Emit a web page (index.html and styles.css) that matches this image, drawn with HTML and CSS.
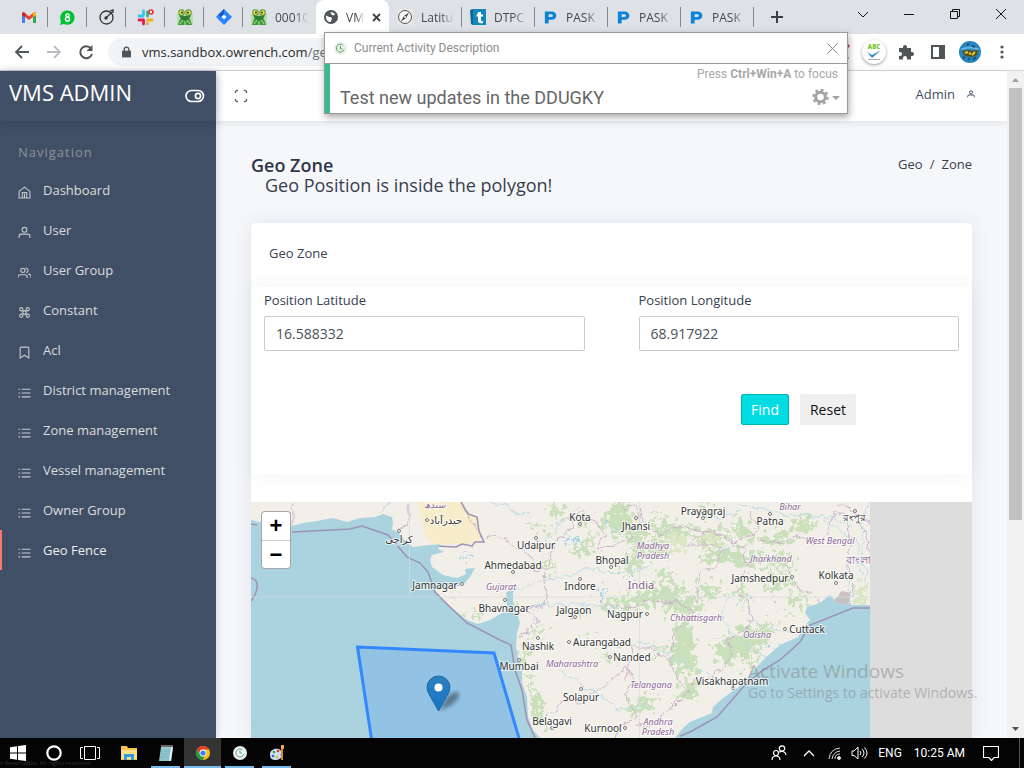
FILE: index.html
```html
<!DOCTYPE html>
<html lang="en">
<head>
    <meta charset="UTF-8">
    <meta name="viewport" content="width=device-width, initial-scale=1.0">
    <title>VMS ADMIN - Geo Zone</title>
    <link rel="stylesheet" href="styles.css">
</head>
<body>
    <!-- shared icon shapes -->
    <svg class="defs" aria-hidden="true">
        <symbol id="i-list" viewBox="0 0 24 24"><path d="M7 6h16M7 13h16M7 20h16M1 6h3M1 13h3M1 20h3"/></symbol>
        <symbol id="i-user" viewBox="0 0 24 24"><circle cx="12" cy="7" r="4.500"/><path d="M2 22v-3a4 4 0 0 1 4-4h12a4 4 0 0 1 4 4v3"/></symbol>
        <symbol id="i-frog" viewBox="0 0 16 16"><path d="M0 5h16v11H0z" fill="#b9dcae"/><path d="M1 16l2-6 5-3 5 3 2 6z" fill="#3f9b3b"/><path d="M2 6l6 1 6-1-2 4-4 2-4-2z" fill="#2e7d32"/><circle cx="4.500" cy="3.500" r="3.200" fill="#4a9a2c"/><circle cx="11.500" cy="3.500" r="3.200" fill="#4a9a2c"/><circle cx="4.500" cy="3.500" r="2.200" fill="#ffe14a"/><circle cx="11.500" cy="3.500" r="2.200" fill="#ffe14a"/><circle cx="5" cy="3.500" r="1" fill="#222"/><circle cx="11" cy="3.500" r="1" fill="#222"/><path d="M3 15l3-4M13 15l-3-4M8 12v4" stroke="#b6e39c"/></symbol>
        <symbol id="i-paypal" viewBox="0 0 16 16"><path d="M2 2h7c7 0 7 9 0 9H6v4H2zM6 5v3h3c2 0 2-3 0-3z" fill="#0b84d8" fill-rule="evenodd"/></symbol>
    </svg>

    <div class="tabstrip">
        <div class="tab pinned"><svg width="14" height="11" viewBox="0 0 14 11"><path d="M0 1.500V11h3V5z" fill="#4285f4"/><path d="M14 1.500V11h-3V5z" fill="#34a853"/><path d="M0 2q0-3 3-1l4 3.200L11 1q3-2 3 1l-3 3-4 3-4-3z" fill="#ea4335"/><path d="M0 2q0-2 2-1.500L3 1v4L0 3z" fill="#c5221f"/><path d="M14 2q0-2-2-1.500L11 1v4l3-2z" fill="#fbbc04"/></svg></div>
        <div class="tab pinned"><svg width="15" height="15" viewBox="0 0 15 15"><path d="M0 15l1-4a7.200 7.200 0 1 1 3 3z" fill="#00c136"/><circle cx="7.500" cy="5.500" r="1.600" fill="none" stroke="#fff" stroke-width="1.400"/><circle cx="7.500" cy="9.200" r="2" fill="none" stroke="#fff" stroke-width="1.400"/></svg></div>
        <div class="tab pinned"><svg width="16" height="16" viewBox="0 0 16 16" fill="none" stroke="#333" stroke-width="1.300"><circle cx="7.500" cy="8.500" r="6.500"/><path d="M7 9l6-6M11 2l3-1v3" /><circle cx="7" cy="9" r="1" fill="#333"/></svg></div>
        <div class="tab pinned"><svg width="17" height="17" viewBox="0 0 17 17" stroke-width="2.800" stroke-linecap="round"><path d="M6.500 2v4M2 7h4" stroke="#36c5f0"/><path d="M10.500 3v4" stroke="#2eb67d"/><path d="M10.500 11H15M10.500 14v1" stroke="#ecb22e"/><path d="M2 11h4M6.500 11v4" stroke="#e01e5a"/><circle cx="14" cy="3" r="2" fill="#fff" stroke="#e0303a" stroke-width="1.600"/></svg></div>
        <div class="tab pinned"><svg width="16" height="16"><use href="#i-frog"/></svg></div>
        <div class="tab pinned"><svg width="16" height="16" viewBox="0 0 16 16"><path d="M8 0l8 8-8 8-8-8z" fill="#2684ff"/><path d="M8 0v5L5 8 2 6z" fill="#0f5bd0"/><path d="M8 5.500L10.500 8 8 10.500 5.500 8z" fill="#fff"/></svg></div>
        <div class="tab bare"><svg width="16" height="16"><use href="#i-frog"/></svg><span class="tab-title">000100</span></div>
        <div class="tab active"><svg width="14" height="14" viewBox="0 0 14 14"><circle cx="7" cy="7" r="7" fill="#50555a"/><path d="M2 5.500c2 .5 3 2 5 1.500l1 2-1.500 3C4 12 2 10 2 7zM7 2l4 1.500-1 2L8 5 6.500 3z" fill="#fff"/></svg><span class="tab-title">VMS</span><button class="tab-close" aria-label="Close tab"><svg width="9" height="9" viewBox="0 0 9 9"><path d="M1 1l7 7M8 1L1 8" stroke="#3c4043" stroke-width="1.800"/></svg></button></div>
        <div class="tab"><svg width="16" height="16" viewBox="0 0 16 16"><path d="M0 0h16v16H0z" fill="#e9e7e2"/><circle cx="8" cy="8" r="6.500" fill="#f5f5f3" stroke="#555"/><path d="M12 3.500L9 9l-5 3.500L7 7z" fill="#333"/><circle cx="8" cy="8" r="1" fill="#fff"/></svg><span class="tab-title">Latitude</span></div>
        <div class="tab"><svg width="16" height="16" viewBox="0 0 16 16"><path d="M0 1l3-1v16l-2-1z" fill="#0e6694"/><path d="M3 0h13v16H3z" fill="#1486b9"/><path d="M8 3h3v2.500h2v2h-2V11q0 1.500 2 1v2q-5 1-5-2.500v-4H6.500V6Q8 5.500 8 3z" fill="#fff"/></svg><span class="tab-title">DTPC T</span></div>
        <div class="tab"><svg width="15" height="16"><use href="#i-paypal"/></svg><span class="tab-title">PASK -</span></div>
        <div class="tab"><svg width="15" height="16"><use href="#i-paypal"/></svg><span class="tab-title">PASK -</span></div>
        <div class="tab"><svg width="15" height="16"><use href="#i-paypal"/></svg><span class="tab-title">PASK -</span></div>
        <button class="new-tab" aria-label="New tab"><svg width="12" height="12" viewBox="0 0 12 12"><path d="M6 0v12M0 6h12" stroke="#3c4043" stroke-width="2"/></svg></button>
        <div class="window-buttons">
            <button aria-label="Search tabs"><svg width="12" height="12" viewBox="0 0 12 12"><path d="M1 4l5 5 5-5"/></svg></button>
            <button aria-label="Minimize"><svg width="12" height="12" viewBox="0 0 12 12"><path d="M1 6.500h10"/></svg></button>
            <button aria-label="Restore"><svg width="12" height="12" viewBox="0 0 12 12"><path d="M1.500 3.500h7v7h-7zM3.500 3V1.500h7v7H9"/></svg></button>
            <button aria-label="Close"><svg width="12" height="12" viewBox="0 0 12 12"><path d="M1 1l10 10M11 1L1 11"/></svg></button>
        </div>
    </div>

    <div class="toolbar">
        <button class="tool" aria-label="Back"><svg width="16" height="16" viewBox="0 0 16 16"><path d="M15 8H2M8 2L2 8l6 6" fill="none" stroke="#50555a" stroke-width="1.800"/></svg></button>
        <button class="tool" aria-label="Forward"><svg width="16" height="16" viewBox="0 0 16 16"><path d="M1 8h13M8 2l6 6-6 6" fill="none" stroke="#b9bcc0" stroke-width="1.800"/></svg></button>
        <button class="tool" aria-label="Reload"><svg width="16" height="16" viewBox="0 0 16 16"><path d="M13 4.500A6 6 0 1 0 14 10" fill="none" stroke="#50555a" stroke-width="2"/><path d="M14.500 1v6h-6z" fill="#50555a"/></svg></button>
        <div class="address">
            <svg width="9" height="12" viewBox="0 0 10 12"><path d="M0 4.500h10V12H0z" fill="#50555a"/><path d="M2.500 5V3a2.500 2.500 0 0 1 5 0v2" fill="none" stroke="#50555a" stroke-width="1.500"/></svg>
            <span>vms.sandbox.owrench.com<i>/geo</i></span>
        </div>
        <svg class="ext-cut" width="14" height="16" viewBox="0 0 14 16"><path d="M1 1l11 14M13 1L2 15" stroke="#d8364f" stroke-width="2.500"/></svg>
        <button class="tool" aria-label="Spell checker"><span class="abc">ABC<svg width="16" height="10" viewBox="0 0 16 10"><path d="M1 2l5 3 9-5-9 8z" fill="#2f8fc4"/><path d="M2 9.500h12" stroke="#aaa"/></svg></span></button>
        <button class="tool" aria-label="Extensions"><svg width="16" height="16" viewBox="0 0 16 16"><path d="M1 4h4V3a2 2 0 0 1 4 0v1h4v4h1a2 2 0 0 1 0 4h-1v3.500H9V14a2 2 0 0 0-4 0v1.500H1V12h1a2 2 0 0 0 0-4H1z" fill="#50555a"/></svg></button>
        <button class="tool" aria-label="Side panel"><svg width="14" height="14" viewBox="0 0 14 14"><path d="M1 1h12v12H1z" fill="none" stroke="#50555a" stroke-width="2"/><path d="M8 1h5v12H8z" fill="#50555a"/></svg></button>
        <button class="tool" aria-label="Profile"><svg width="22" height="22" viewBox="0 0 22 22"><circle cx="11" cy="11" r="11" fill="#2586bd"/><path d="M1 8q10-5 20 0l-3 1Q11 6 4 9z" fill="#69b4dc"/><path d="M3 10l6-1 5 1 5-1-1 5-5 2-7-1z" fill="#574f1d"/><path d="M6 12l3-1M13 14l3-3M10 12l2 1" stroke="#e3cc2c" stroke-width="2"/><path d="M4 17l2-1M9 19l2-2M14 19l3-3M8 4l2-1M13 5l3 1" stroke="#173f68" stroke-width="1.500"/></svg></button>
        <button class="tool" aria-label="Menu"><svg width="4" height="14" viewBox="0 0 4 14" fill="#50555a"><circle cx="2" cy="2" r="1.600"/><circle cx="2" cy="7" r="1.600"/><circle cx="2" cy="12" r="1.600"/></svg></button>
    </div>

    <div class="page">
        <aside class="sidebar">
            <div class="brand">
                <a href="#">VMS ADMIN</a>
                <button aria-label="Toggle sidebar"><svg width="20" height="14" viewBox="0 0 20 14" fill="none" stroke="#fff" stroke-width="1.600"><rect x="1" y="1.500" width="17.500" height="11" rx="5.500"/><circle cx="13" cy="7" r="2.600"/></svg></button>
            </div>
            <div class="nav-label">Navigation</div>
            <nav>
                <a href="#"><svg viewBox="0 0 24 24"><path d="M2 10L12 2l10 8v12H2zM8 22V12h8v10M12 14v8"/></svg>Dashboard</a>
                <a href="#"><svg><use href="#i-user"/></svg>User</a>
                <a href="#"><svg viewBox="0 0 24 24"><circle cx="9" cy="8" r="4"/><path d="M0 22v-2a4 4 0 0 1 4-4h9a4 4 0 0 1 4 4v2M14 4a4 4 0 1 1 1 8M19 15q5 0 5 5v2"/></svg>User Group</a>
                <a href="#"><svg viewBox="0 0 24 24"><path d="M18 3a3 3 0 0 0-3 3v12a3 3 0 1 0 3-3H6a3 3 0 1 0 3 3V6a3 3 0 1 0-3 3h12a3 3 0 1 0 0-6z"/></svg>Constant</a>
                <a href="#"><svg viewBox="0 0 24 24"><path d="M20 22l-8-5-8 5V4a2 2 0 0 1 2-2h12a2 2 0 0 1 2 2z"/></svg>Acl</a>
                <a href="#"><svg><use href="#i-list"/></svg>District management</a>
                <a href="#"><svg><use href="#i-list"/></svg>Zone management</a>
                <a href="#"><svg><use href="#i-list"/></svg>Vessel management</a>
                <a href="#"><svg><use href="#i-list"/></svg>Owner Group</a>
                <a href="#" class="current"><svg><use href="#i-list"/></svg>Geo Fence</a>
            </nav>
        </aside>

        <main class="main">
            <header class="topbar">
                <button aria-label="Full screen"><svg width="14" height="14" viewBox="0 0 14 14"><path d="M1.500 4V3A1.500 1.500 0 0 1 3 1.500h1M10 1.500h1A1.500 1.500 0 0 1 12.500 3v1M12.500 10v1a1.500 1.500 0 0 1-1.500 1.500h-1M4 12.500H3A1.500 1.500 0 0 1 1.500 11v-1" fill="none" stroke="#56627a" stroke-width="1.300"/></svg></button>
                <a href="#" class="account">Admin <svg width="8" height="8"><use href="#i-user"/></svg></a>
            </header>

            <div class="content">
                <div class="page-head">
                    <div>
                        <h1>Geo Zone</h1>
                        <p>Geo Position is inside the polygon!</p>
                    </div>
                    <div class="crumbs"><a href="#">Geo</a><span>/</span><a href="#">Zone</a></div>
                </div>

                <section class="card">
                    <h2>Geo Zone</h2>
                    <form class="search">
                        <div class="fields">
                            <div class="field">
                                <label for="lat">Position Latitude</label>
                                <input id="lat" type="text" value="16.588332">
                            </div>
                            <div class="field">
                                <label for="lng">Position Longitude</label>
                                <input id="lng" type="text" value="68.917922">
                            </div>
                        </div>
                        <div class="actions">
                            <button type="button" class="btn btn-find">Find</button>
                            <button type="reset" class="btn">Reset</button>
                        </div>
                    </form>

                    <div class="map">
                        <svg class="tiles" width="619" height="236" viewBox="251 502 619 236">
                            <defs>
                                <filter id="rough" x="-10%" y="-10%" width="120%" height="120%"><feTurbulence type="fractalNoise" baseFrequency="0.16" numOctaves="4" seed="4"/><feDisplacementMap in="SourceGraphic" scale="34" xChannelSelector="R" yChannelSelector="G"/></filter>
                                <filter id="wobble" x="-10%" y="-10%" width="120%" height="120%"><feTurbulence type="fractalNoise" baseFrequency="0.1" numOctaves="3" seed="9"/><feDisplacementMap in="SourceGraphic" scale="10" xChannelSelector="R" yChannelSelector="G"/></filter>
                                <filter id="soft"><feGaussianBlur stdDeviation="2"/></filter>
                                <linearGradient id="pin" x1="0" y1="0" x2="0" y2="1"><stop offset="0" stop-color="#2e80bd"/><stop offset="1" stop-color="#1675c8"/></linearGradient>
                                <clipPath id="coast"><use href="#land"/></clipPath>
                            </defs>
                            <path id="land" fill="#f2efe9" d="M251 502V520L260 522 272 521 292 526 303 523 317 521 333 518 347 522 360 518 375 517 383 514 392 517 393 523 392 529 399 533 407 543 413 547 430 545 440 544 438 549 444 552 432 555 430 560 432 567 443 575 457 578 466 574 465 569 475 568 470 577 463 585 453 587 442 587 435 590 443 600 457 612 467 620 478 624 490 620 500 614 505 612 507 603 506 592 513 590 513 603 517 613 520 623 517 633 516 647 518 657 522 670 522 683 527 697 528 717 533 730 540 738H675L683 728 690 722 712 713 713 707 723 698 740 686 750 675 763 660 780 645 798 637 807 623 810 620 805 613 807 607 820 603 830 595 837 603 850 605 870 605V502Z"/>
                            <g clip-path="url(#coast)">
                                <path fill="#f7edcb" d="M418 502h44l6 10 9 5 4 20-4 6-42 2-9-8-5-20z"/>
                                <g class="wood" filter="url(#rough)">
                                    <path d="M603 510l20-10 10 20-15 18-12-8zM625 535l12-12 8 14-10 12zM650 523l40 2-5 8-30 2zM690 532l30-4 14 12-20 6-18-4zM636 549l34-14 12 8-30 12-22 20-12-6zM598 606l22-9 40-10-4-16 14-4-2 22 20-4-8 14-30 6-42 4zM696 554l40-4 26 8-8 6-50-2zM666 602l30-5 10 12-34 8zM676 625l14-6 4 30 4 22-20 0-8-14zM714 645l20-12 6 22-18 14zM727 640l18-14 28-2-6 20-20 12-24 2zM684 678l14 4-2 14-16 4zM626 705l28-12 5 8-26 15zM520 640l9 0-2 30-4 12zM530 685l10 10 6 30-12 2zM510 604l8 4-4 14zM454 598l8 0-2 4zM468 612l16-2 0 8-12-2zM533 640l8-16 4 6zM733 520l18 6 2 12-18-4zM760 538l24-6 10 8-22 8zM790 522l20-4 6 12-18 6zM752 560l20-6 24 6-8 6-34 2zM762 578l24-6 8 12-22 6zM788 600l12-8 6 10-12 10zM735 590l10-14 4 24zM526 520l22 8-6 6zM548 506l20 0-10 20zM544 556l12 16-8 4zM570 548l30-14-16 26zM742 668l16-14-4 14zM650 506l16 10-10 4zM575 610l14 4-10 6zM583 635l8 8-6 4zM600 652l18 4-10 4zM650 650l14 0-2 8zM576 520l14-6-8 14zM700 588l14-8 8 14-16 4zM698 506l14 4-8 6z"/>
                                </g>
                                <g fill="#dbe6c3" filter="url(#rough)"><path d="M668 535l18 0 4 12-20 4zM690 533l34 4-12 10zM656 540l24-8-6 14zM851 590l14-6 4 18-18 0z"/></g>
                                <g class="water" filter="url(#rough)"><path d="M462 556l6-5 3 6zM572 536l4 4-4 6-4-6zM598 592l4-4 2 8zM606 520l2 8 2-2zM534 612l6-6 2 4zM738 602l8 0-6 8zM770 606l6 0 0 4zM720 548l6 0-2 6zM772 648l8-6-4 8zM630 575l8-3-6 6z"/></g>
                                <path d="M834 602l8-8 8-2 1 14-16 1z" fill="#c8c1c3" filter="url(#wobble)"/>
                                <g class="rivers" filter="url(#wobble)"><path d="M490 502l40 14M740 502l30 10 30 4 30 2 22 10M825 520l18 12 14 10 4 40M866 502l-4 46 6 40M700 510l20 10 20-10M580 505l-20 18-14 20M510 592l30-10 50-14 30 6 30-8M520 610l40-6 40 2 30 6M640 640l40 20 30 18M560 670l30 20 30 20 30-5M770 660l-30-18-20-22 8-26M800 636l-30-8-22-8M850 604l-4-44M380 514l8-12"/></g>
                                <g class="borders" filter="url(#wobble)">
                                    <path d="M293 502v30M408 502v22l-16 10M463 502l6 16 13 20 18-2 16 10 14 10 6 14 12-2 10-30 6-4 10-8-6-8 16-6 4 8 10 2 6 14-8 12 18-2 20-8-2-14 8-4-4-14-12 2 2-10M545 572l2 20-4 16-22 0 18 12-12 14-8 4M600 602l30 6 20-8 30 2 16 12-20 16-6 30 8 20 12 14M696 602l4-28 16-10 8-14-12-6-24 0 12-10 20-2 14 12 10 6 2 18-8 22 10 10 4 26-24 14 4 16-18 20-20 10-22 22-26 20-10-4M640 506l4 22 20 6 10-8 22 4 28 4 10 10 24-14-8-20M548 718l14-16 20 0 24-18 20-16 8 14-10 14 14 20-24 16-2 18M627 680l6-32 18 0 20 16M760 540l20 4 16-8 22 8 8-12 8-18 10 0 6 26-2 20 6 40M784 556l6 20 10 14 12 4 10 10M860 520l8 20 2 22M500 720l20-14M838 502l14 8 14 4 4 10"/>
                                </g>
                                <path d="M461 502l7 12 9 3 2 14 5 11-9 0-3 4-10-2-6 3-20-1v7l-10 2-6 8" class="state"/>
                            </g>
                            <path class="state" d="M251 524l6 1M292 532l58-3 12-3 26 9 19 22 13 6 8 9 7 20 18 18 14 13 33 17 11 5 4 25 7 20 5 30 8 18M870 608h-17l-43 17-10 17-20 18-17 10-18 15-28 32-27 15-10 4M251 578q10 2 4 17l-4 6"/>
                            <path class="seam" d="M251 597h619M409.500 502v94M639.500 502v236"/>

                            <g class="towns">
                                <circle cx="427" cy="520" r="1.500"/><circle cx="399" cy="531" r="1.500"/><circle cx="462" cy="584" r="1.500"/><circle cx="580" cy="524" r="1.500"/><circle cx="536" cy="538" r="1.500"/><circle cx="513" cy="572" r="1.500"/><circle cx="505" cy="600" r="1.500"/><circle cx="611" cy="567" r="1.500"/><circle cx="580" cy="579" r="1.500"/><circle cx="636" cy="518" r="1.500"/><circle cx="703" cy="518" r="1.500"/><circle cx="575" cy="617" r="1.500"/><circle cx="647" cy="614" r="1.500"/><circle cx="538" cy="638" r="1.500"/><circle cx="569" cy="642" r="1.500"/><circle cx="610" cy="657" r="1.500"/><circle cx="519" cy="660" r="1.500"/><circle cx="581" cy="689" r="1.500"/><circle cx="552" cy="728" r="1.500"/><circle cx="625" cy="728" r="1.500"/><circle cx="733" cy="688" r="1.500"/><circle cx="770" cy="514" r="1.500"/><circle cx="792" cy="577" r="1.500"/><circle cx="836" cy="583" r="1.500"/><circle cx="785" cy="629" r="1.500"/><circle cx="855" cy="511" r="1.500"/>
                            </g>
                            <g class="city">
                                <text x="446" y="524">حيدرآباد</text><text x="399" y="543">کراچی</text><text x="435" y="589">Jamnagar</text><text x="580" y="521">Kota</text><text x="536" y="549">Udaipur</text><text x="513" y="569">Ahmedabad</text><text x="504" y="612">Bhavnagar</text><text x="612" y="564">Bhopal</text><text x="580" y="590">Indore</text><text x="636" y="530">Jhansi</text><text x="703" y="515">Prayagraj</text><text x="574" y="614">Jalgaon</text><text x="625" y="618">Nagpur</text><text x="538" y="650">Nashik</text><text x="602" y="646">Aurangabad</text><text x="632" y="661">Nanded</text><text x="519" y="670">Mumbai</text><text x="581" y="701">Solapur</text><text x="552" y="725">Belagavi</text><text x="603" y="732">Kurnool</text><text x="732" y="685">Visakhapatnam</text><text x="770" y="525">Patna</text><text x="760" y="582">Jamshedpur</text><text x="836" y="579">Kolkata</text><text x="807" y="633">Cuttack</text><text x="854" y="521">রংপুর</text>
                            </g>
                            <g class="region">
                                <text x="435" y="508">سندھ</text><text x="501" y="590">Gujarat</text><text x="653" y="549">Madhya</text><text x="653" y="559">Pradesh</text><text x="696" y="621">Chhattisgarh</text><text x="572" y="667">Maharashtra</text><text x="651" y="688">Telangana</text><text x="658" y="725">Andhra</text><text x="658" y="735">Pradesh</text><text x="790" y="510">Bihar</text><text x="830" y="544">West Bengal</text><text x="771" y="562">Jharkhand</text><text x="757" y="638">Odisha</text>
                            </g>
                            <g class="country"><text x="641" y="589">India</text><text x="858" y="564">বাংলা</text></g>

                            <path class="zone" d="M357.500 647L494 653 526 762H375z"/>
                            <path d="M439 711l8-14q10-8 12-3 0 9-20 17z" fill="#000" opacity=".4" filter="url(#soft)"/>
                            <path d="M438.500 711l-9-16q-2.500-4-2.500-7.500a11.500 11.500 0 0 1 23 0q0 3.500-2.500 7.500z" fill="url(#pin)" stroke="#2268a0"/>
                            <circle cx="438.500" cy="687.500" r="4" fill="#fff"/>
                        </svg>
                        <div class="zoom">
                            <button aria-label="Zoom in">+</button>
                            <button aria-label="Zoom out">−</button>
                        </div>
                    </div>
                </section>
            </div>
        </main>

        <div class="scrollbar">
            <svg width="9" height="5" viewBox="0 0 9 5"><path d="M1 5l3.500-4L8 5z" fill="#a3a3a3"/></svg>
            <div class="thumb"></div>
            <svg width="9" height="5" viewBox="0 0 9 5"><path d="M1 0l3.500 4L8 0z" fill="#505050"/></svg>
        </div>
    </div>

    <div class="taskbar">
        <button class="task" aria-label="Start"><svg width="16" height="16" viewBox="0 0 16 16"><path d="M0 2.300l7-1v6.200H0zM8 1.100L16 0v7.500H8zM0 8.500h7v6.200l-7-1zM8 8.500h8V16l-8-1.100z" fill="#fff"/></svg></button>
        <button class="task" aria-label="Cortana"><svg width="16" height="16" viewBox="0 0 16 16"><circle cx="8" cy="8" r="6.700" fill="none" stroke="#fff" stroke-width="2.200"/></svg></button>
        <button class="task" aria-label="Task view"><svg width="20" height="16" viewBox="0 0 20 16"><path d="M4.500 1.500h11v13h-11zM3 2.500H.5v11H3M17 2.500h2.500v11H17" fill="none" stroke="#fff"/></svg></button>
        <button class="task app" aria-label="File Explorer"><svg width="16" height="14" viewBox="0 0 16 14"><path d="M0 0h6l1 2h9v12H0z" fill="#f5c64b"/><path d="M0 4h16v9H0z" fill="#ffe08a"/><path d="M3 14V8h10v6h-3v-3H6v3z" fill="#2f9be0"/></svg></button>
        <button class="task app open" aria-label="Notepad"><svg width="16" height="17" viewBox="0 0 16 17"><path d="M3 2h12l-2 14H1z" fill="#8fc5cf"/><path d="M13 2h2l-2 14h-2z" fill="#e0eef0"/><path d="M4 0v3M6 0v3M8 0v3M10 0v3M12 0v3M14 0v3" stroke="#ccc"/><path d="M3 6h9M3 9h8M2 12h9" stroke="#7db4be"/></svg></button>
        <button class="task app open focused" aria-label="Chrome"><svg width="14" height="14" viewBox="0 0 14 14"><circle cx="7" cy="7" r="7" fill="#fbc116"/><path d="M1 3.500a7 7 0 0 1 12 0H7a3.500 3.500 0 0 0-3 5.200z" fill="#e33b2e"/><path d="M1 3.500l3 5.200a3.500 3.500 0 0 0 4.500 1.600L7 14A7 7 0 0 1 1 3.500z" fill="#1b9a4e"/><circle cx="7" cy="7" r="3.400" fill="#fff"/><circle cx="7" cy="7" r="2.600" fill="#3b7ded"/></svg></button>
        <button class="task app open" aria-label="Time tracker"><svg width="14" height="14" viewBox="0 0 14 14"><circle cx="7" cy="7" r="7" fill="#eee"/><path d="M9.500 4a4 4 0 1 0 1.200 4M7 4.500V7h2" fill="none" stroke="#5bb585"/></svg></button>
        <button class="task app open" aria-label="Paint"><svg width="16" height="16" viewBox="0 0 16 16"><path d="M1 9c0-5 9-7 11-3 1 2-1 3 0 5s-2 4-6 4-5-3-5-6z" fill="#c9e2f1"/><circle cx="5" cy="7" r="1.300" fill="#3b9c46"/><circle cx="9" cy="6" r="1.300" fill="#d33"/><circle cx="4" cy="11" r="1.300" fill="#2769c7"/><circle cx="8" cy="12" r="1.300" fill="#efb91e"/><path d="M13 1v14" stroke="#d9862c" stroke-width="2"/><path d="M12 0h3v4h-3z" fill="#e8aa52"/></svg></button>
        <span class="ghost">s Reservados. All rights reserved.</span>
        <div class="tray">
            <svg width="16" height="16" viewBox="0 0 16 16" fill="none" stroke="#fff" stroke-width="1.200"><circle cx="11" cy="3.500" r="2.700"/><circle cx="5" cy="8" r="2.500"/><path d="M1 15q0-4 4-4t4 4M8 7q6-2 7 3"/></svg>
            <svg width="12" height="8" viewBox="0 0 12 8" fill="none" stroke="#fff" stroke-width="1.300"><path d="M1 7l5-5 5 5"/></svg>
            <svg width="13" height="13" viewBox="0 0 13 13" fill="none" stroke="#ddd"><path d="M1 12Q2 2 12 1M4 12Q5 5 12 4M7 12q0-5 5-5"/><circle cx="11" cy="11" r="1.500" fill="#fff"/></svg>
            <svg width="17" height="14" viewBox="0 0 17 14" fill="none" stroke="#fff"><path d="M1 5h2l4-4v12L3 9.500H1zM9 5q2 2 0 4M11 3q4 4 0 8M13.500 1.500q5 5.500 0 11"/></svg>
            <span>ENG</span>
            <span class="clock">10:25 AM</span>
            <svg width="16" height="16" viewBox="0 0 16 16" fill="none" stroke="#fff" stroke-width="1.200"><path d="M.5 1.500h15v11H11l-2.500 3L6 12.500H.5z"/></svg>
        </div>
    </div>

    <div class="activity">
        <div class="activity-head">
            <svg width="13" height="13" viewBox="0 0 13 13"><circle cx="6.500" cy="6.500" r="6.500" fill="#eee"/><path d="M9 3.200a4 4 0 1 0 1 4.500M6.500 4v3h2" fill="none" stroke="#4caf50"/></svg>
            <span>Current Activity Description</span>
            <button aria-label="Close activity"><svg width="11" height="11" viewBox="0 0 11 11"><path d="M.5.5l10 10M10.500.5l-10 10" stroke="#888"/></svg></button>
        </div>
        <div class="activity-body">
            <small>Press <b>Ctrl+Win+A</b> to focus</small>
            <div class="activity-row">
                <span>Test new updates in the DDUGKY</span>
                <button aria-label="Activity settings"><svg width="28" height="16" viewBox="0 0 28 16"><circle cx="8.500" cy="8" r="4.800" fill="none" stroke="#a5a5a5" stroke-width="3"/><circle cx="8.500" cy="8" r="7" fill="none" stroke="#a5a5a5" stroke-width="2.500" stroke-dasharray="2.750 2.750"/><path d="M20 7h8l-4 4z" fill="#a5a5a5"/></svg></button>
            </div>
        </div>
    </div>

    <div class="watermark">
        <strong>Activate Windows</strong>
        <span>Go to Settings to activate Windows.</span>
    </div>
</body>
</html>
```
FILE: styles.css
```css
* {
    margin: 0;
    padding: 0;
    box-sizing: border-box;
}

body {
    font-family: "Open Sans", "Noto Sans", sans-serif;
    font-size: 13px;
    color: #37404f;
    height: 100vh;
    display: flex;
    flex-direction: column;
    overflow: hidden;
    position: relative;
}

a {
    color: inherit;
    text-decoration: none;
}

button {
    font: inherit;
    border: 0;
    background: none;
    display: flex;
    align-items: center;
    justify-content: center;
}

svg {
    flex: none;
}

.defs {
    display: none;
}

/* Browser tabs */
.tabstrip {
    display: flex;
    height: 34px;
    padding-left: 9px;
    background: #dee1e6;
    font-size: 12px;
    color: #45494d;
}

.tab {
    display: flex;
    align-items: center;
    gap: 8px;
    width: 73px;
    padding: 0 8px;
    position: relative;
}

.tab::after {
    content: "";
    position: absolute;
    right: 0;
    top: 7px;
    width: 1px;
    height: 20px;
    background: #85888c;
}

.pinned {
    width: 39px;
    justify-content: center;
}

.bare::after,
.active::after {
    display: none;
}

.active {
    background: #fff;
    border-radius: 8px 8px 0 0;
}

.tab-title {
    flex: 1;
    overflow: hidden;
    white-space: nowrap;
    mask-image: linear-gradient(90deg, #000 60%, transparent);
}

.new-tab {
    width: 46px;
}

.window-buttons {
    display: flex;
    margin-left: auto;
}

.window-buttons button {
    width: 46px;
    height: 28px;
}

.window-buttons path {
    fill: none;
    stroke: #111;
}

/* Browser toolbar */
.toolbar {
    display: flex;
    align-items: center;
    height: 37px;
    padding: 0 6px;
    background: #fff;
    border-bottom: 1px solid #d5d6d8;
}

.tool {
    width: 32px;
    height: 32px;
}

.address {
    flex: 1;
    display: flex;
    align-items: center;
    gap: 11px;
    height: 28px;
    margin: 0 28px 0 6px;
    padding: 0 14px;
    border-radius: 14px;
    background: #f1f3f4;
    font-size: 13px;
    color: #2a2d31;
}

.address i {
    font-style: normal;
    color: #6a6e73;
}

.ext-cut {
    margin-right: 8px;
}

.abc {
    width: 24px;
    height: 24px;
    flex: none;
    display: flex;
    flex-direction: column;
    align-items: center;
    justify-content: center;
    border-radius: 50%;
    box-shadow: 0 1px 3px rgba(0,0,0,0.4);
    font-size: 6px;
    line-height: 6px;
    font-weight: 800;
    color: #7ac62c;
}

/* Page */
.page {
    flex: 1;
    min-height: 0;
    display: flex;
}

.sidebar {
    width: 216px;
    flex: none;
    background: #414f66;
    color: #dcdcdc;
    box-shadow: 0 0 8px rgba(40,50,70,0.2);
    z-index: 1;
}

.brand {
    display: flex;
    align-items: center;
    justify-content: space-between;
    height: 50px;
    padding: 0 11px 0 9px;
    color: #fff;
    font-size: 22px;
    line-height: 30px;
    box-shadow: 0 3px 8px rgba(30,40,60,0.25);
}

.brand a {
    padding-bottom: 8px;
}

.nav-label {
    padding: 21px 18px 8px;
    line-height: 20px;
    letter-spacing: 1px;
    color: #8e9194;
}

nav a {
    display: flex;
    align-items: center;
    gap: 12px;
    height: 40px;
    padding-left: 16px;
    border-left: 2px solid transparent;
}

nav svg {
    width: 13px;
    height: 13px;
    margin-top: 5px;
    fill: none;
    stroke: #c6c8ca;
    stroke-width: 2;
}

nav .current {
    border-color: #f8786c;
    color: #eee;
}

.main {
    flex: 1;
    min-width: 0;
    display: flex;
    flex-direction: column;
    background: #f6f7fb;
}

.topbar {
    display: flex;
    align-items: center;
    justify-content: space-between;
    height: 50px;
    flex: none;
    padding: 0 32px 0 18px;
    background: #fff;
    box-shadow: 0 1px 8px rgba(69,90,100,0.15);
}

.account {
    display: flex;
    align-items: center;
    gap: 12px;
    padding-bottom: 5px;
    color: #414f66;
}

.account svg {
    fill: none;
    stroke: #414f66;
    stroke-width: 3;
}

.content {
    flex: 1;
    min-height: 0;
    display: flex;
    flex-direction: column;
    padding: 34px 35px 0;
}

.page-head {
    display: flex;
    justify-content: space-between;
    height: 68px;
}

.page-head h1 {
    font-size: 18px;
    line-height: 20px;
    font-weight: 600;
    color: #303549;
}

.page-head p {
    padding-left: 14px;
    font-size: 18px;
    line-height: 20px;
}

.crumbs {
    display: flex;
    gap: 7px;
    line-height: 18px;
}

.card {
    flex: 1;
    min-height: 0;
    display: flex;
    flex-direction: column;
    background: #fff;
    border-radius: 5px 5px 0 0;
    box-shadow: 0 0 18px rgba(69,90,120,0.12);
}

.card h2 {
    padding: 20px 18px 24px;
    font-size: 13px;
    line-height: 20px;
    font-weight: 500;
    color: #3c4350;
}

.search {
    height: 188px;
    flex: none;
    padding: 3px 13px;
    border-radius: 5px;
    box-shadow: 0 0 18px rgba(69,90,90,0.08);
}

.fields {
    display: grid;
    grid-template-columns: 1fr 1fr;
    gap: 54px;
}

.field {
    display: flex;
    flex-direction: column;
    gap: 6px;
    line-height: 20px;
}

.field input {
    width: 100%;
    height: 35px;
    padding: 0 11px;
    border: 1px solid #ccc;
    border-radius: 2px;
    font: inherit;
    font-size: 14px;
    color: #495057;
}

.actions {
    display: flex;
    justify-content: flex-end;
    gap: 11px;
    margin-top: 43px;
    padding-right: 103px;
}

.btn {
    height: 31px;
    padding: 0 10px;
    border-radius: 2px;
    background: #efefef;
    font-size: 14px;
    color: #111;
}

.btn-find {
    padding: 0 9px;
    border: 1px solid #00b5b8;
    background: #00dce1;
    color: #fff;
}

/* Map */
.map {
    flex: 1;
    min-height: 0;
    margin-top: 27px;
    position: relative;
    overflow: hidden;
    background: #ddd;
}

.tiles {
    display: block;
    background: #aad3df;
    font-family: "Noto Sans", "DejaVu Sans", sans-serif;
    font-size: 10px;
    text-anchor: middle;
}

.tiles text {
    paint-order: stroke;
    stroke: rgba(255,255,255,0.7);
    stroke-width: 2px;
}

.wood { fill: #c9e0bb; }
.water { fill: #a6d4e4; }

.rivers,
.borders,
.state,
.seam {
    fill: none;
}

.rivers { stroke: #bcdce5; }
.borders { stroke: #cbb3ca; }

.state {
    stroke: #9c93b4;
    stroke-width: 1.5px;
}

.seam {
    stroke: #d6dcdc;
    opacity: 0.7;
}

.towns {
    fill: #fff;
    stroke: #777;
}

.city { fill: #333; }

.region {
    font-size: 9px;
    font-style: italic;
    fill: #8d6796;
}

.country {
    font-size: 11px;
    fill: #85608d;
}

.zone {
    fill: rgba(51,136,255,0.2);
    stroke: #3388ff;
    stroke-width: 3px;
}

.zoom {
    position: absolute;
    left: 10px;
    top: 9px;
    border: 1px solid rgba(0,0,0,0.35);
    border-radius: 4px;
    background: #fff;
}

.zoom button {
    width: 28px;
    height: 28px;
    font: bold 22px "Liberation Sans", sans-serif;
    color: #000;
}

.zoom button + button {
    border-top: 1px solid #ccc;
}

.scrollbar {
    width: 17px;
    flex: none;
    display: flex;
    flex-direction: column;
    align-items: center;
    justify-content: space-between;
    padding: 6px 0;
    background: #f1f1f1;
}

.thumb {
    width: 13px;
    height: 66%;
    margin: 6px 0 auto;
    background: #c1c1c1;
}

/* Windows taskbar */
.taskbar {
    display: flex;
    height: 30px;
    flex: none;
    position: relative;
    background: #040404;
    color: #fff;
    font-size: 12px;
}

.task {
    width: 36px;
    position: relative;
}

.task:nth-child(3) {
    margin-right: 2px;
}

.app {
    width: 37px;
}

.open::after {
    content: "";
    position: absolute;
    left: 4px;
    right: 4px;
    bottom: 0;
    height: 2px;
    background: #76b9ed;
}

.focused {
    background: #343434;
}

.focused::after {
    left: 0;
    right: 0;
}

.ghost {
    position: absolute;
    left: 0;
    bottom: 1px;
    font-size: 6px;
    line-height: 8px;
    color: #303030;
}

.tray {
    display: flex;
    align-items: center;
    gap: 10px;
    margin: 0 4px 0 auto;
    padding-right: 20px;
    border-right: 1px solid #555;
    font-family: Roboto, sans-serif;
}

.tray svg:nth-child(2) {
    margin: 0 3px 0 6px;
}

.clock {
    margin: 0 8px 0 2px;
}

/* Floating activity window */
.activity {
    position: absolute;
    left: 324px;
    top: 32px;
    width: 524px;
    z-index: 5;
    background: #fff;
    border: 1px solid #9a9a9a;
    box-shadow: 1px 3px 7px rgba(0,0,0,0.35);
    font-family: Roboto, sans-serif;
}

.activity-head {
    display: flex;
    align-items: center;
    gap: 7px;
    height: 31px;
    padding: 0 9px;
    border-bottom: 1px solid #9a9a9a;
    font-size: 12px;
    color: #8d8d8d;
}

.activity-head button {
    margin-left: auto;
}

.activity-body {
    height: 49px;
    padding: 2px 7px 0 10px;
    border-left: 5px solid #36bd8c;
}

.activity-body small {
    display: block;
    padding-right: 2px;
    text-align: right;
    font-size: 12px;
    line-height: 16px;
    color: #a8a8a8;
}

.activity-row {
    display: flex;
    align-items: center;
    justify-content: space-between;
    height: 30px;
    font-size: 18px;
    color: #666;
}

/* Windows activation notice */
.watermark {
    position: absolute;
    right: 39px;
    bottom: 65px;
    z-index: 6;
    width: 237px;
    font-size: 14px;
    line-height: 20px;
    white-space: nowrap;
    color: rgba(130,130,130,0.5);
    pointer-events: none;
}

.watermark strong {
    display: block;
    font-size: 19px;
    line-height: 24px;
    font-weight: 400;
}
```
